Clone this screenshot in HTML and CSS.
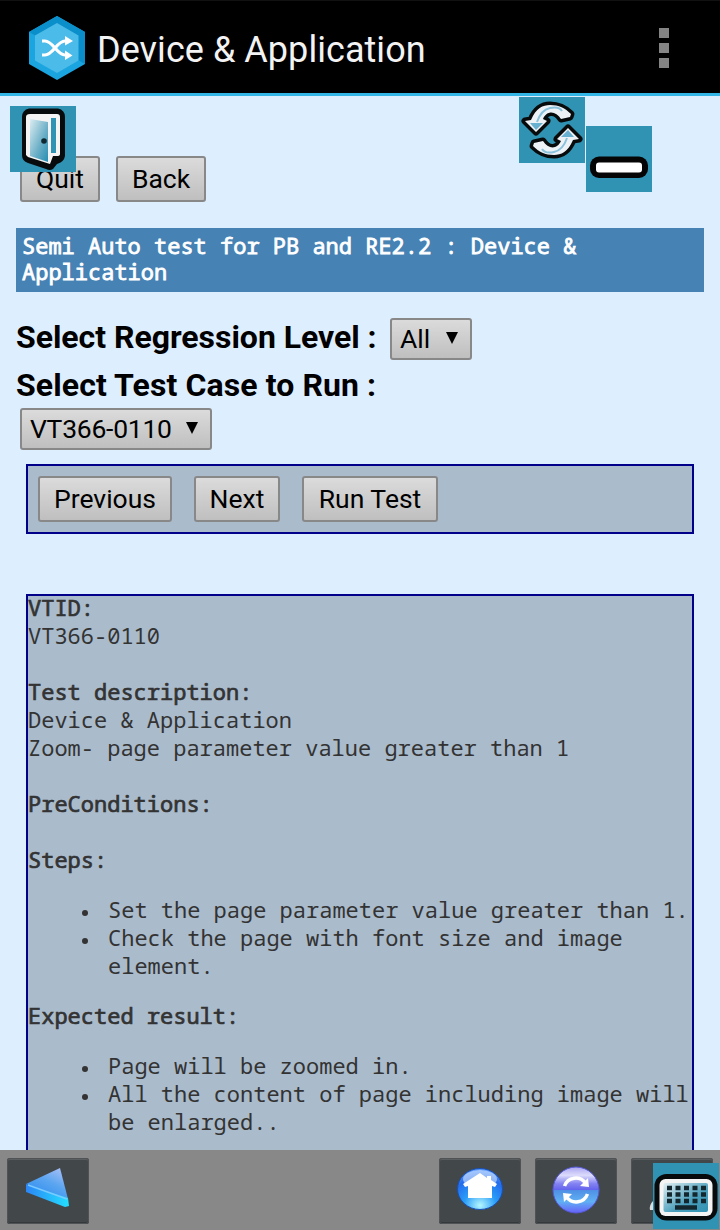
FILE: index.html
```html
<!DOCTYPE html>
<html lang="en">
<head>
<meta charset="utf-8">
<title>Device &amp; Application</title>
<link rel="stylesheet" href="styles.css">
</head>
<body>
<div class="app">
  <header class="appbar">
    <svg class="logo" width="56" height="64" viewBox="0 0 56 64">
      <path fill="#1ba5e0" d="M28 0 56 16V48L28 64 0 48V16Z"/>
      <path fill="#0a8fca" d="M28 0 56 16V48L28 32 0 16Z"/>
      <path fill="#4bbbe9" d="M28 7 49.500 19.500V44.500L28 57 6 44.500V19.500Z"/>
      <g fill="none" stroke="#fff" stroke-width="3.200"><path d="M13 25h3c8 0 12 14 20 14h2"/><path d="M13 39h3c8 0 12-14 20-14h2"/></g>
      <path fill="#fff" d="M36 20 44 25 36 29.500ZM36 34.500 43.500 39.500 36 44Z"/>
    </svg>
    <h1 class="appbar-title">Device &amp; Application</h1>
    <div class="overflow"><i></i><i></i><i></i></div>
  </header>

  <main class="page">
    <div class="row top-row">
      <button class="btn quit">Quit</button>
      <button class="btn back">Back</button>
    </div>
    <div class="banner">Semi Auto test for PB and RE2.2 : Device &amp; Application</div>
    <div class="field"><span class="label">Select Regression Level :</span><div class="select all"><span>All</span><svg width="12" height="12" viewBox="0 0 12 12"><path d="M0 0H12L6 12Z"/></svg></div></div>
    <div class="label second">Select Test Case to Run :</div>
    <div class="select case"><span>VT366-0110</span><svg width="12" height="12" viewBox="0 0 12 12"><path d="M0 0H12L6 12Z"/></svg></div>
    <div class="row controls">
      <button class="btn prev">Previous</button>
      <button class="btn next">Next</button>
      <button class="btn run">Run Test</button>
    </div>
    <section class="details">
      <div class="details-text">
      <b>VTID:</b><br>VT366-0110<br><br>
      <b>Test description:</b><br>Device &amp; Application<br>Zoom- page parameter value greater than 1<br><br>
      <b>PreConditions:</b><br><br>
      <b>Steps:</b>
      <ul><li>Set the page parameter value greater than 1.</li><li>Check the page with font size and image element.</li></ul>
      <b>Expected result:</b>
      <ul><li>Page will be zoomed in.</li><li>All the content of page including image will be enlarged..</li></ul>
      </div>
    </section>
  </main>

  <footer class="toolbar">
    <div class="tool tool-back">
      <svg width="82" height="66" viewBox="0 0 82 66">
        <defs>
          <linearGradient id="face" x1="1" y1="0" x2=".3" y2="1"><stop offset="0" stop-color="#b5c5fa"/><stop offset=".5" stop-color="#5ba5f0"/><stop offset="1" stop-color="#2c8cf0"/></linearGradient>
          <linearGradient id="edge"><stop offset="0" stop-color="#2c86f6"/><stop offset="1" stop-color="#23e0ff"/></linearGradient>
        </defs>
        <path fill="url(#face)" d="M53 10 19 26 61 41Z"/>
        <path fill="url(#edge)" d="M19 26 61 40 62 48 58 49 19 34Z"/>
        <path fill="none" stroke="#7cc9ff" stroke-width="1.500" d="M21 27 60 41"/>
      </svg>
    </div>
    <div class="tool">
      <svg width="82" height="66" viewBox="0 0 82 66">
        <defs><radialGradient id="orb" cy=".9" r=".9"><stop offset="0" stop-color="#b4f6ff"/><stop offset=".4" stop-color="#299cf8"/><stop offset=".75" stop-color="#246cec"/><stop offset="1" stop-color="#5d9cff"/></radialGradient></defs>
        <ellipse cx="41" cy="31" rx="22.500" ry="20.500" fill="url(#orb)" stroke="#1750b8"/>
        <ellipse cx="41" cy="21" rx="17" ry="9" fill="#dbe9ff" opacity=".6"/>
        <path fill="#fff" d="M41 15 24 26 26 29 29 28V40H53V28L56 29 58 26 52 22V18H48V20Z"/>
      </svg>
    </div>
    <div class="tool">
      <svg width="82" height="66" viewBox="0 0 82 66">
        <defs><linearGradient id="sync" x2="0" y2="1"><stop offset="0" stop-color="#a9a4f2"/><stop offset=".18" stop-color="#dcdcfb"/><stop offset=".36" stop-color="#8483f2"/><stop offset=".49" stop-color="#6665ed"/><stop offset=".5" stop-color="#4f8fe4"/><stop offset=".75" stop-color="#60b0f4"/><stop offset="1" stop-color="#6860f8"/></linearGradient></defs>
        <circle cx="41" cy="32" r="23" fill="url(#sync)" stroke="#5559d8"/>
        <path fill="none" stroke="#fff" stroke-width="3.500" d="M29.500 28a12 12 0 0 1 21-3M52.500 36a12 12 0 0 1-21 3"/>
        <path fill="#fff" d="M53 20 54 29 45 28ZM29 44 28 35 37 36Z"/>
      </svg>
    </div>
    <div class="tool">
      <svg width="82" height="66" viewBox="0 0 82 66"><path fill="#ddd" d="M22 43q-4 4-3 9h4z"/></svg>
    </div>
  </footer>

  <svg class="badge door" viewBox="0 0 66 66">
    <defs><linearGradient id="panel" x2="1" y2="1"><stop offset="0" stop-color="#dcedf2"/><stop offset=".6" stop-color="#68adc5"/><stop offset="1" stop-color="#258fb3"/></linearGradient></defs>
    <rect width="66" height="66" fill="#3193b4"/>
    <path fill="#080b0c" d="M19 2.500H48Q55 4 55 11V50Q54 56 47 58L43 63Q40 65 36 63L18 57Q12 55 12 49V11Q12 4 19 2.500Z"/>
    <path fill="#f4f4f4" d="M20 8H47Q50 8 50 11V48Q50 50 47 50H43L40 58 18 51 16 49V11Q16 8 20 8Z"/>
    <path fill="url(#panel)" d="M20 13 38 16V56L20 50Z"/>
    <path fill="#3193b4" d="M41 12H46V47H41Z"/>
    <path fill="#f4f4f4" d="M38 14 41 12V55L38 57Z"/>
    <circle cx="34" cy="35" r="2.800" fill="#102832"/>
  </svg>
  <svg class="badge refresh" viewBox="0 0 66 66">
    <defs>
      <g id="arrow">
        <path class="arrow-outline" d="M6 24 12 23C17 11 24 8 31 8 40 8 46 11 52 17L51 20 42 22C37 14 28 13 24 22L28 24 17 35Z"/>
        <path fill="none" stroke="#8ac2dc" stroke-width="2" d="M18 25Q22 13 31 11T43 14"/>
        <path fill="#68b0cf" d="M11 26H24L17 33Z"/>
      </g>
    </defs>
    <rect width="66" height="66" fill="#3193b4"/>
    <use href="#arrow"/>
    <use href="#arrow" transform="rotate(180 33 33)"/>
  </svg>
  <svg class="badge minus" viewBox="0 0 66 66"><rect width="66" height="66" fill="#3193b4"/><rect x="4" y="30.500" width="58" height="21.500" rx="9" fill="#050505"/><rect x="10" y="36.500" width="46" height="10" rx="3" fill="#fff"/></svg>
  <svg class="badge keyboard" viewBox="0 0 66 66">
    <defs><linearGradient id="keys" x2="1" y2="1"><stop offset="0" stop-color="#e3f0f4"/><stop offset=".6" stop-color="#4a9fbd"/><stop offset="1" stop-color="#3193b4"/></linearGradient></defs>
    <rect width="66" height="66" fill="#3193b4"/>
    <rect x="1.500" y="11" width="63" height="46.500" rx="12" fill="#080b0c"/>
    <rect x="6.500" y="16" width="53" height="37" rx="6" fill="#f4f4f4"/>
    <rect x="10.500" y="20" width="44.500" height="29" rx="2" fill="url(#keys)"/>
    <path stroke="#15272e" stroke-width="4.500" stroke-dasharray="5 3.500" d="M14 25H53M14 31.500H53M14 38H53"/>
    <path stroke="#15272e" stroke-width="4.500" d="M22 44.500H44"/>
  </svg>
</div>
</body>
</html>
```
FILE: styles.css
```css
* { box-sizing: border-box; }
body { margin: 0; font-family: Roboto, sans-serif; color: #000; }
.app { position: relative; display: flex; flex-direction: column; width: 720px; height: 1230px; overflow: hidden; background: #ddeeff; }
.appbar { display: flex; align-items: center; flex: none; height: 96px; padding: 2px 51px 0 29px; background: #000; border-top: 1px solid #111; border-bottom: 3px solid #33b5e5; }
.logo { flex: none; }
.appbar-title { flex: 1; margin: 4px 0 0 12px; font-size: 36px; font-weight: 400; line-height: 44px; letter-spacing: .05px; color: #f3f3f3; white-space: nowrap; }
.overflow { display: grid; gap: 5px; }
.overflow i { width: 10px; height: 10px; background: #848484; }
.page { flex: 1; min-height: 0; padding: 60px 16px 0; overflow: hidden; }
.row { display: flex; }
.top-row { gap: 16px; padding-left: 4px; }
.btn, .select { flex: none; border: 2px solid #888; border-radius: 3px; background: linear-gradient(#dbdbdb, #bfbfbf); color: #000; font: 400 26.500px/30px Roboto, sans-serif; white-space: nowrap; }
.btn { height: 46px; padding: 0; text-align: center; }
.quit { width: 80px; }
.back { width: 90px; }
.prev { width: 134px; }
.next { width: 86px; }
.run { width: 136px; }
.banner { height: 64px; margin-top: 26px; padding: 4px 6px; background: #4682b4; color: #fff; font: 400 22px/26px "Noto Sans Mono", "DejaVu Sans Mono", monospace; -webkit-text-stroke: .8px #fff; }
.field { display: flex; height: 42px; margin-top: 26px; }
.label { font-size: 32px; font-weight: 700; line-height: 38px; white-space: nowrap; }
.field .label { width: 374px; letter-spacing: -.03px; }
.second { margin-top: 6px; letter-spacing: .1px; }
.select { display: flex; align-items: center; justify-content: space-between; height: 42px; padding: 0 12px 0 8px; }
.select svg { margin-top: -2px; }
.all { width: 82px; }
.case { width: 192px; margin: 4px 0 0 4px; letter-spacing: -.25px; }
.controls { height: 70px; margin: 14px 10px 0; padding: 10px; gap: 22px; border: 2px solid #00008b; background: #aabbcc; }
.details { height: 640px; margin: 60px 10px 0; border: 2px solid #00008b; background: #aabbcc; color: #333; font: 400 22px/28px "Noto Sans Mono", "DejaVu Sans Mono", monospace; }
.details-text { margin-top: -3px; }
.details b { font-weight: 400; -webkit-text-stroke: .7px #333; }
.details ul { margin: 22px 0; padding-left: 80px; list-style: none; }
.details li::before { content: ""; float: left; width: 6px; height: 6px; margin: 15px 0 0 -26px; border-radius: 50%; background: #333; }
.toolbar { display: flex; flex: none; gap: 14px; height: 80px; padding: 8px 7px 0; background: #888; }
.tool { flex: none; width: 82px; height: 66px; border-radius: 3px; background: #42474a; box-shadow: inset 0 0 0 1px #505356, inset 0 2px #5b5e60, inset 0 -2px #36393b; }
.tool-back { margin-right: auto; }
.badge { position: absolute; width: 66px; height: 66px; }
.arrow-outline { fill: #edf2f6; stroke: #080b0c; stroke-width: 7; stroke-linejoin: round; paint-order: stroke; }
.door { left: 10px; top: 106px; }
.refresh { left: 519px; top: 97px; }
.minus { left: 586px; top: 126px; }
.keyboard { left: 653px; top: 1163px; }
```
